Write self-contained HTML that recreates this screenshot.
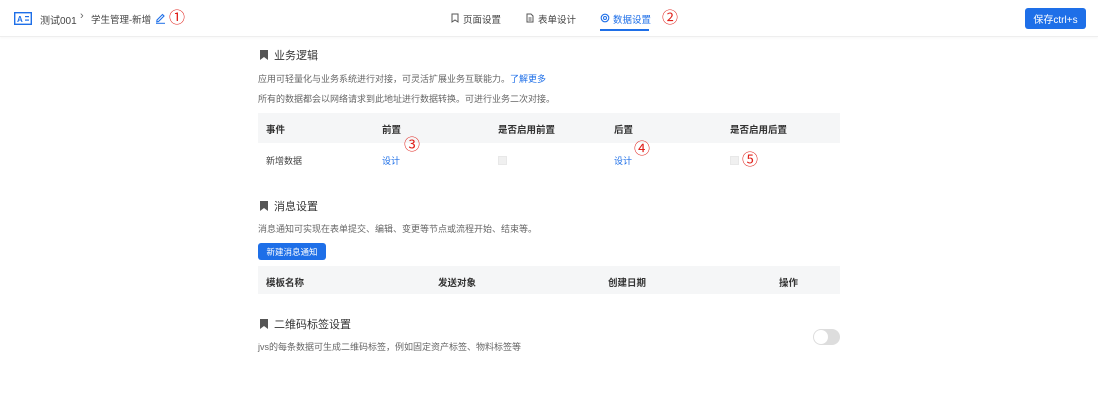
<!DOCTYPE html>
<html><head><meta charset="utf-8"><style>
*{margin:0;padding:0;box-sizing:border-box}
body{width:1098px;height:407px;background:#fff;font-family:"Liberation Sans","Noto Sans CJK SC",sans-serif;color:#333;position:relative;overflow:hidden}
.a{position:absolute;white-space:nowrap}
.hdr{position:absolute;left:0;top:0;width:1098px;height:37px;border-bottom:1px solid #eee;box-shadow:0 1px 3px rgba(0,0,0,.04)}
.red{color:#e0201a;font-size:16px;line-height:16px}
.t{font-size:11px;color:#333}
.s{font-size:9px;color:#666}
.h{font-size:9.5px;font-weight:bold;color:#333}
.bm{position:absolute;width:8px;height:10px;background:#555;clip-path:polygon(0 0,100% 0,100% 100%,50% 70%,0 100%)}
.th{position:absolute;background:#f5f6f7;height:30px}
</style></head><body>
<div class="hdr"></div>
<svg class="a" style="left:14px;top:12px" width="18" height="13" viewBox="0 0 18 13"><rect x="0.7" y="0.7" width="16.6" height="11.6" fill="none" stroke="#1e6fe8" stroke-width="1.4"/><text x="3" y="10" font-size="8" font-weight="bold" fill="#1e6fe8" font-family="Liberation Sans">A</text><rect x="11" y="4" width="4" height="1.2" fill="#1e6fe8"/><rect x="11" y="7.5" width="4" height="1.2" fill="#1e6fe8"/></svg>
<div class="a" style="left:40px;top:12px;font-size:10px;color:#444">测试001</div>
<div class="a" style="left:80px;top:10px;font-size:11px;color:#666">›</div>
<div class="a" style="left:91px;top:12px;font-size:9.5px;color:#444">学生管理-新增</div>
<svg class="a" style="left:155px;top:12px" width="11" height="12" viewBox="0 0 11 12"><path d="M2 8 L7.5 2.5 L9 4 L3.5 9.5 L1.8 9.8Z" fill="none" stroke="#1e6fe8" stroke-width="1.1"/><path d="M1 11.3H10" stroke="#1e6fe8" stroke-width="1"/></svg>
<div class="a red" style="left:169px;top:11px">①</div>
<svg class="a" style="left:451px;top:13px" width="8" height="10"><path d="M1 1H7V9L4 7L1 9Z" fill="none" stroke="#555" stroke-width="1"/></svg>
<div class="a" style="left:463px;top:12px;font-size:9.5px;color:#444">页面设置</div>
<svg class="a" style="left:526px;top:13px" width="8" height="10"><path d="M1 1H5L7 3V9H1Z M2.5 5H5.5 M2.5 7H5.5" fill="none" stroke="#555" stroke-width="1"/></svg>
<div class="a" style="left:538px;top:12px;font-size:9.5px;color:#444">表单设计</div>
<svg class="a" style="left:600px;top:13px" width="10" height="10"><circle cx="5" cy="5" r="3.8" fill="none" stroke="#1e6fe8" stroke-width="1.1"/><circle cx="5" cy="5" r="1.5" fill="none" stroke="#1e6fe8"/></svg>
<div class="a" style="left:613px;top:12px;font-size:9.5px;color:#1e6fe8">数据设置</div>
<div class="a" style="left:600px;top:29px;width:49px;height:2px;background:#1e6fe8"></div>
<div class="a red" style="left:662px;top:11px">②</div>
<div class="a" style="left:1025px;top:8px;width:61px;height:21px;background:#1e6fe8;border-radius:3px;color:#fff;font-size:10px;display:flex;align-items:center;justify-content:center">保存ctrl+s</div>

<div class="bm" style="left:260px;top:50px"></div>
<div class="a t" style="left:274px;top:47px">业务逻辑</div>
<div class="a s" style="left:258px;top:72px">应用可轻量化与业务系统进行对接，可灵活扩展业务互联能力。<span style="color:#1e6fe8">了解更多</span></div>
<div class="a s" style="left:258px;top:92px">所有的数据都会以网络请求到此地址进行数据转换。可进行业务二次对接。</div>
<div class="th" style="left:258px;top:113px;width:582px"></div>
<div class="a h" style="left:266px;top:122px">事件</div>
<div class="a h" style="left:382px;top:122px">前置</div>
<div class="a h" style="left:498px;top:122px">是否启用前置</div>
<div class="a h" style="left:614px;top:122px">后置</div>
<div class="a h" style="left:730px;top:122px">是否启用后置</div>
<div class="a s" style="left:266px;top:154px;color:#444">新增数据</div>
<div class="a s" style="left:382px;top:154px;color:#1e6fe8">设计</div>
<div class="a red" style="left:404px;top:138px">③</div>
<div class="a" style="left:498px;top:156px;width:9px;height:9px;background:#f0f0f0;border:1px solid #e8e8e8"></div>
<div class="a s" style="left:614px;top:154px;color:#1e6fe8">设计</div>
<div class="a red" style="left:634px;top:142px">④</div>
<div class="a" style="left:730px;top:156px;width:9px;height:9px;background:#f0f0f0;border:1px solid #e8e8e8"></div>
<div class="a red" style="left:742px;top:153px">⑤</div>

<div class="bm" style="left:260px;top:201px"></div>
<div class="a t" style="left:274px;top:198px">消息设置</div>
<div class="a s" style="left:258px;top:222px">消息通知可实现在表单提交、编辑、变更等节点或流程开始、结束等。</div>
<div class="a" style="left:258px;top:243px;width:68px;height:17px;background:#1e6fe8;border-radius:3px;color:#fff;font-size:8.5px;display:flex;align-items:center;justify-content:center">新建消息通知</div>
<div class="th" style="left:258px;top:266px;width:582px;height:28px"></div>
<div class="a h" style="left:266px;top:275px">模板名称</div>
<div class="a h" style="left:438px;top:275px">发送对象</div>
<div class="a h" style="left:608px;top:275px">创建日期</div>
<div class="a h" style="left:779px;top:275px">操作</div>

<div class="bm" style="left:260px;top:319px"></div>
<div class="a t" style="left:274px;top:316px">二维码标签设置</div>
<div class="a s" style="left:258px;top:340px">jvs的每条数据可生成二维码标签，例如固定资产标签、物料标签等</div>
<div class="a" style="left:813px;top:329px;width:27px;height:16px;background:#ddd;border-radius:8px"><div style="position:absolute;left:1px;top:1px;width:14px;height:14px;border-radius:7px;background:#fff"></div></div>
</body></html>
